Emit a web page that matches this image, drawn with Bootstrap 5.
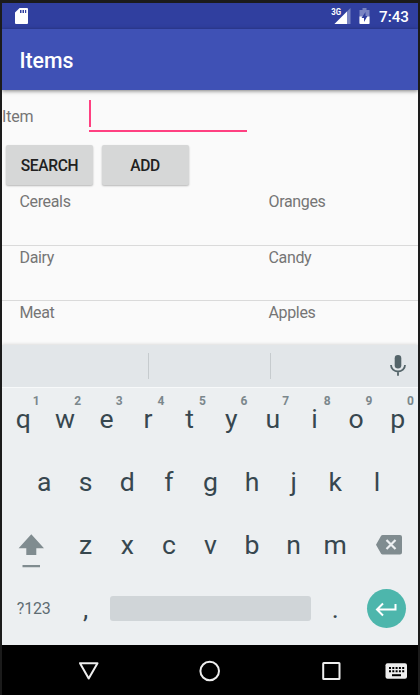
<!DOCTYPE html>
<html lang="en">
<head>
<meta charset="utf-8">
<meta name="viewport" content="width=device-width, initial-scale=1">
<title>Items</title>
<link href="https://cdn.jsdelivr.net/npm/bootstrap@5.3.0/dist/css/bootstrap.min.css" rel="stylesheet">
<style>
html, body { height: 695px; overflow: hidden; }
body { background: #1b1b1b; font-family: Roboto, sans-serif; padding: 3px 2px 0; line-height: 1; }
svg { display: block; flex: none; }
.device { width: 416px; height: 692px; background: #fafafa; }
.status { height: 26px; background: #303f9f; padding: 0 9px 0 13px; }
.clock { font-size: 15.2px; font-weight: 500; line-height: 26px; padding-top: 1px; }
.appbar { height: 61px; background: #3f51b5; padding: 3px 17.5px 0; box-shadow: 0 1px 4px rgba(0,0,0,.5); z-index: 2; }
.appbar h1 { font-size: 21.3px; font-weight: 500; }
.content-area { height: 255px; color: #757575; font-size: 16px; letter-spacing: -.35px; }
.item-row { height: 55px; }
.item-label { width: 87px; line-height: 18px; padding-top: 18px; letter-spacing: -.2px; }
.item-field { width: 158px; height: 32px; margin-top: 9.5px; border-bottom: 2px solid #ff4081; }
.caret { width: 2px; height: 27px; background: #ff4081; }
.btn-key { width: 87px; height: 40px; background: #d6d7d7; color: #212121; font-size: 15.6px; letter-spacing: -.35px; font-weight: 500; line-height: 40px; padding: 1px 0 0; border: 0; border-radius: 2px; box-shadow: 0 1px 2px rgba(0,0,0,.28); }
.buttons { gap: 8.5px; padding-left: 4px; height: 45px; }
.entry { height: 55.5px; border-bottom: 1px solid #dadada; line-height: 18px; padding: 3px 0 0 17.5px; }
.entry span { flex: 0 0 249px; }
.keyboard { height: 300px; background: #eceff1; box-shadow: 0 -1px 3px rgba(0,0,0,.12); z-index: 1; }
.strip { height: 42px; background: #e2e6e9; }
.strip span { height: 26px; border-right: 1px solid #c6cbce; }
.suggest-first { width: 147px; }
.suggest-mid { width: 122px; }
.keys { height: 258px; border-top: 1px solid #f7f9fa; color: #37474f; }
.krow { height: 63.2px; }
.keycap { width: 41.6px; height: 63px; font-size: 26.6px; line-height: 61px; text-align: center; padding-left: 1px; }
.keycap sup { right: 2px; top: 7px; width: 11px; font-size: 12px; line-height: 12px; font-weight: 700; color: #7b878c; }
.wide { width: 62.4px; height: 63px; }
.sym { font-size: 16px; color: #5f6c72; padding-left: 1px; letter-spacing: -.2px; }
.space-bar { width: 201px; height: 25px; border-radius: 3px; background: #d0d5d8; margin: -1px 0 0 1px; }
.space-cell { width: 208px; }
.enter { width: 39px; height: 39px; background: #4db6ac; margin-top: -2px; }
.navkeys { height: 50px; background: #000; }
.navkeys svg { width: 416px; height: 50px; }
</style>
</head>
<body>
<div class="device d-flex flex-column overflow-hidden">
  <header class="status d-flex align-items-center text-white">
    <svg width="13" height="16" viewBox="0 0 13 16"><path d="M4.600 0H12a1 1 0 0 1 1 1v14a1 1 0 0 1-1 1H1a1 1 0 0 1-1-1V4.600z" fill="#fff"/><path d="M5 2h1.500v3H5zM7.500 2H9v3H7.500zM10 2h1.200v3H10z" fill="#303f9f"/></svg>
    <svg class="ms-auto" width="42" height="18" viewBox="0 0 42 18">
      <path d="M21.500 1v16h-16z" fill="#7984c2"/><path d="M18 4.500V17H5.500z" fill="#fff"/>
      <text x="2.300" y="8.300" font-size="9" font-weight="700" fill="#fff" textLength="9.800" lengthAdjust="spacingAndGlyphs">3G</text>
      <path d="M33.500 1h4v2h3v14h-10V3h3z" fill="#7984c2"/><path d="M30.500 9.500h10V16a1 1 0 0 1-1 1h-8a1 1 0 0 1-1-1z" fill="#fff"/><path d="M36.500 5l-4 6H35v4l3.500-6h-2z" fill="#303f9f"/>
    </svg>
    <span class="clock ms-2">7:43</span>
  </header>
  <div class="appbar d-flex align-items-center text-white position-relative"><h1 class="m-0">Items</h1></div>
  <main class="content-area overflow-hidden">
    <div class="item-row d-flex">
      <label class="item-label">Item</label>
      <div class="item-field"><div class="caret"></div></div>
    </div>
    <div class="buttons d-flex">
      <button class="btn btn-key" type="button">SEARCH</button>
      <button class="btn btn-key" type="button">ADD</button>
    </div>
    <div class="entry d-flex"><span>Cereals</span><span>Oranges</span></div>
    <div class="entry d-flex"><span>Dairy</span><span>Candy</span></div>
    <div class="entry d-flex"><span>Meat</span><span>Apples</span></div>
  </main>
  <section class="keyboard position-relative">
    <div class="strip d-flex align-items-center">
      <span class="suggest-first"></span><span class="suggest-mid"></span>
      <svg class="ms-auto me-2" width="24" height="24" viewBox="0 0 24 24" fill="none"><rect x="8.700" y="1" width="6.600" height="13.500" rx="3.300" fill="#546469"/><path d="M5 11a7 6.500 0 0 0 14 0M12 17.500v4.300" stroke="#546469" stroke-width="1.800"/></svg>
    </div>
    <div class="keys">
      <div class="krow d-flex">
        <div class="keycap position-relative">q<sup class="position-absolute">1</sup></div><div class="keycap position-relative">w<sup class="position-absolute">2</sup></div><div class="keycap position-relative">e<sup class="position-absolute">3</sup></div><div class="keycap position-relative">r<sup class="position-absolute">4</sup></div><div class="keycap position-relative">t<sup class="position-absolute">5</sup></div><div class="keycap position-relative">y<sup class="position-absolute">6</sup></div><div class="keycap position-relative">u<sup class="position-absolute">7</sup></div><div class="keycap position-relative">i<sup class="position-absolute">8</sup></div><div class="keycap position-relative">o<sup class="position-absolute">9</sup></div><div class="keycap position-relative">p<sup class="position-absolute">0</sup></div>
      </div>
      <div class="krow d-flex justify-content-center">
        <div class="keycap">a</div><div class="keycap">s</div><div class="keycap">d</div><div class="keycap">f</div><div class="keycap">g</div><div class="keycap">h</div><div class="keycap">j</div><div class="keycap">k</div><div class="keycap">l</div>
      </div>
      <div class="krow d-flex">
        <div class="wide"><svg width="62" height="63" viewBox="0 0 62 63" fill="#808c90"><path d="M29.300 20.300l12.700 14h-7.700v6.700h-10V34.300h-7.700zM20.500 51h17.500v2.300H20.500z"/></svg></div>
        <div class="keycap">z</div><div class="keycap">x</div><div class="keycap">c</div><div class="keycap">v</div><div class="keycap">b</div><div class="keycap">n</div><div class="keycap">m</div>
        <div class="wide"><svg width="62" height="63" viewBox="0 0 62 63"><path d="M26.700 21h17.300a2 2 0 0 1 2 2v15.500a2 2 0 0 1-2 2H26.700q-1 0-1.600-.8L20 30.700l5.100-8.900q.6-.8 1.600-.8z" fill="#808c90"/><path d="M30.500 26l9 9m0-9l-9 9" stroke="#eceff1" stroke-width="2.200"/></svg></div>
      </div>
      <div class="krow d-flex align-items-center">
        <div class="wide sym d-flex align-items-center justify-content-center">?123</div>
        <div class="keycap">,</div>
        <div class="space-cell d-flex justify-content-center"><div class="space-bar"></div></div>
        <div class="keycap">.</div>
        <div class="wide d-flex align-items-center justify-content-center"><div class="enter rounded-circle"><svg width="39" height="39" viewBox="0 0 39 39" fill="none" stroke="#fff" stroke-width="2"><path d="M28.500 15v5.500H10.500M16 14.500l-6 6 6 6"/></svg></div></div>
      </div>
    </div>
  </section>
  <footer class="navkeys">
    <svg viewBox="0 0 416 50" fill="none" stroke="#eee" stroke-width="2"><path d="M78 18.200h17.500L86.700 33.500z" stroke-linejoin="round"/><circle cx="207.700" cy="26" r="9.300"/><rect x="321.200" y="18" width="16.300" height="16" rx=".5"/><rect x="383.500" y="18.300" width="21.500" height="15.500" rx="2" fill="#eee" stroke="none"/><path d="M387 23h15.500M387 26.300h15.500" stroke="#000" stroke-width="1.900" stroke-dasharray="2 1.300"/><path d="M390 30.200h9" stroke="#000"/></svg>
  </footer>
</div>
<script src="https://cdn.jsdelivr.net/npm/bootstrap@5.3.0/dist/js/bootstrap.bundle.min.js"></script>
</body>
</html>
